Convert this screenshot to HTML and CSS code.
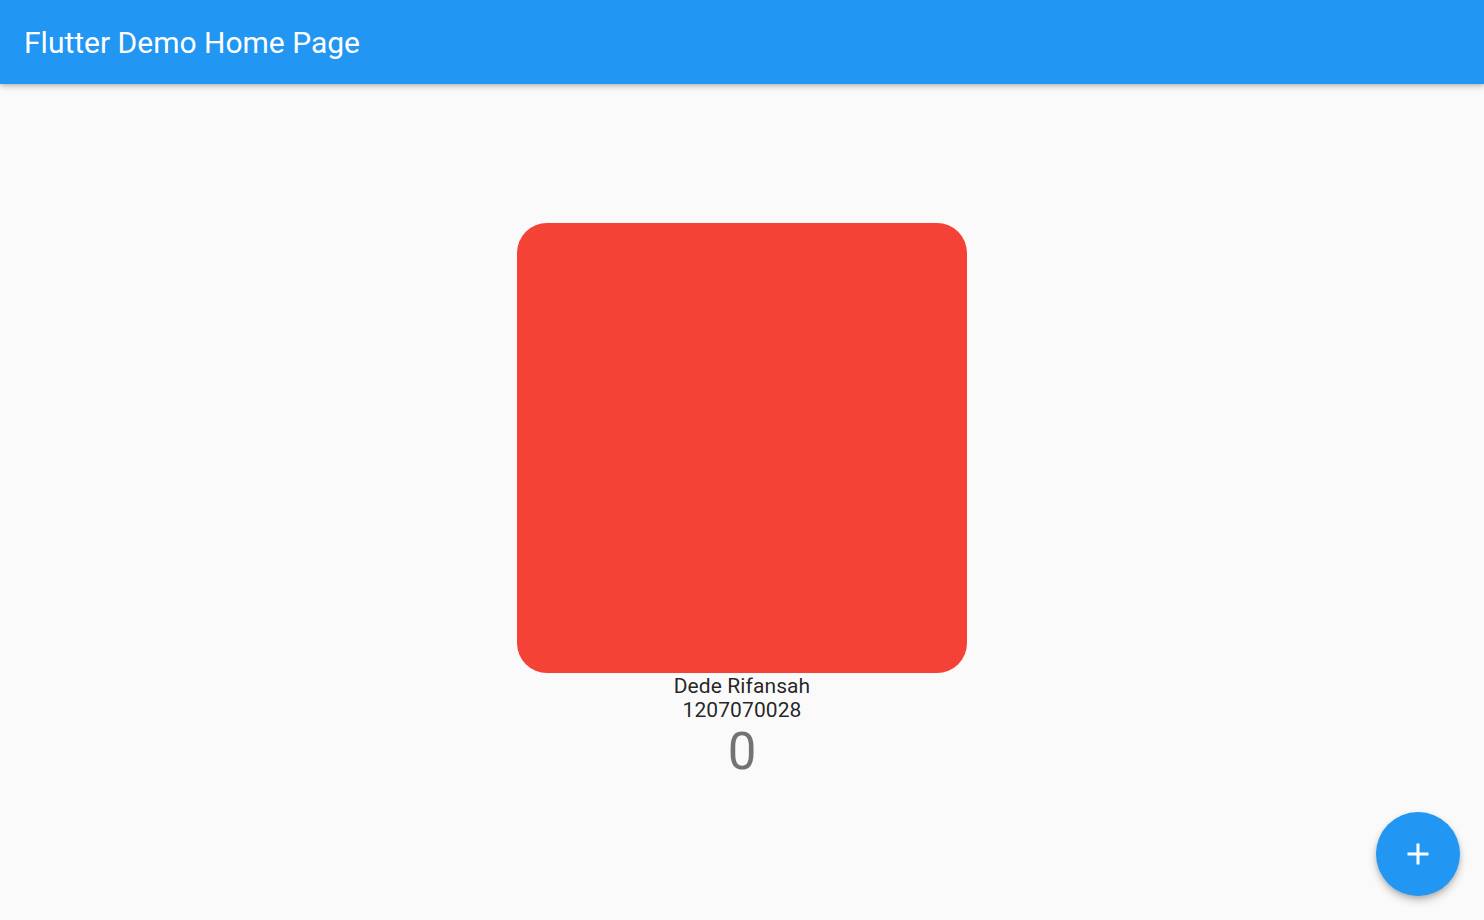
FILE: index.html
```html
<!DOCTYPE html>
<html>
<head>
<meta charset="utf-8">
<link rel="stylesheet" href="styles.css">
</head>
<body>
<div class="app">
  <header class="appbar">
    <h1 class="title">Flutter Demo Home Page</h1>
  </header>
  <main class="body">
    <div class="column">
      <div class="box"></div>
      <div class="name">Dede Rifansah</div>
      <div class="nim">1207070028</div>
      <div class="counter">0</div>
    </div>
  </main>
  <button class="fab" aria-label="Increment">
    <svg width="36" height="36" viewBox="0 0 24 24"><path fill="#fff" d="M19 13h-6v6h-2v-6H5v-2h6V5h2v6h6v2z"/></svg>
  </button>
</div>
</body>
</html>
```
FILE: styles.css
```css
html, body {
  margin: 0;
  padding: 0;
  height: 100%;
}
body {
  background: #fafafa;
  font-family: Roboto, "Noto Sans", sans-serif;
  overflow: hidden;
}
.app {
  display: flex;
  flex-direction: column;
  height: 100vh;
  position: relative;
}
.appbar {
  height: 84px;
  flex: none;
  background: #2196f3;
  display: flex;
  align-items: center;
  padding: 0 24px;
  box-shadow: 0 3px 6px rgba(0,0,0,0.18), 0 1px 3px rgba(0,0,0,0.12);
  position: relative;
  z-index: 1;
}
.title {
  margin: 0;
  font-size: 30px;
  font-weight: 400;
  color: #fff;
  letter-spacing: 0;
}
.body {
  flex: 1;
  display: flex;
  align-items: center;
  justify-content: center;
}
.column {
  display: flex;
  flex-direction: column;
  align-items: center;
}
.box {
  width: 450px;
  height: 450px;
  background: #f44336;
  border-radius: 30px;
}
.name {
  font-size: 21px;
  line-height: 24px;
  padding-top: 1px;
  color: rgba(0,0,0,0.87);
  letter-spacing: 0.1px;
}
.nim {
  font-size: 21px;
  line-height: 24px;
  color: rgba(0,0,0,0.87);
  letter-spacing: 0.1px;
}
.counter {
  font-size: 51px;
  line-height: 60px;
  color: rgba(0,0,0,0.54);
}
.fab {
  position: absolute;
  right: 24px;
  bottom: 24px;
  width: 84px;
  height: 84px;
  border-radius: 50%;
  border: none;
  background: #2196f3;
  display: flex;
  align-items: center;
  justify-content: center;
  padding: 0;
  box-shadow: 0 5px 9px rgba(0,0,0,0.2), 0 2px 4px rgba(0,0,0,0.14);
}
```
